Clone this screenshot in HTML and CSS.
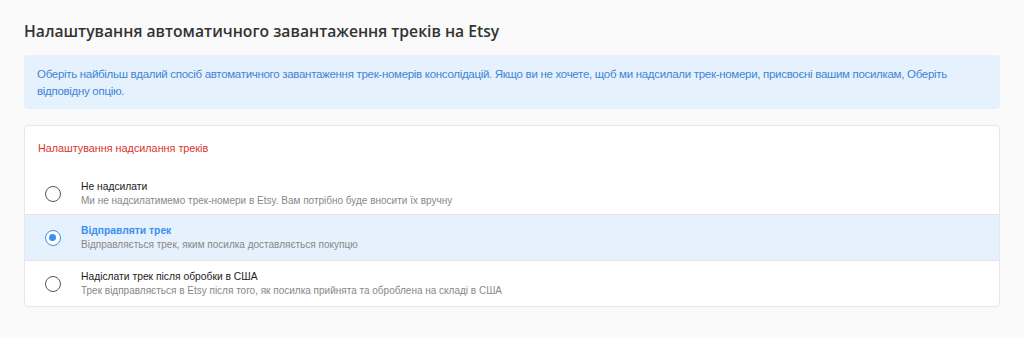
FILE: index.html
```html
<!DOCTYPE html>
<html lang="uk">
<head>
    <meta charset="UTF-8">
    <meta name="viewport" content="width=device-width, initial-scale=1.0">
    <title>Налаштування треків Etsy</title>
    <link rel="stylesheet" href="styles.css">
</head>
<body>
    <div class="page">
        <h1 class="page-title">Налаштування автоматичного завантаження треків на Etsy</h1>

        <div class="info-box">
            Оберіть найбільш вдалий спосіб автоматичного завантаження трек-номерів консолідацій. Якщо ви не хочете, щоб ми надсилали трек-номери, присвоєні вашим посилкам, Оберіть відповідну опцію.
        </div>

        <div class="card">
            <div class="card-header">Налаштування надсилання треків</div>

            <label class="option">
                <span class="radio"></span>
                <span class="option-text">
                    <span class="option-title">Не надсилати</span>
                    <span class="option-desc">Ми не надсилатимемо трек-номери в Etsy. Вам потрібно буде вносити їх вручну</span>
                </span>
            </label>

            <label class="option selected">
                <span class="radio"></span>
                <span class="option-text">
                    <span class="option-title">Відправляти трек</span>
                    <span class="option-desc">Відправляється трек, яким посилка доставляється покупцю</span>
                </span>
            </label>

            <label class="option">
                <span class="radio"></span>
                <span class="option-text">
                    <span class="option-title">Надіслати трек після обробки в США</span>
                    <span class="option-desc">Трек відправляється в Etsy після того, як посилка прийнята та оброблена на складі в США</span>
                </span>
            </label>
        </div>
    </div>
</body>
</html>
```

FILE: styles.css
```css
body {
    margin: 0;
    background-color: #fafafa;
    font-family: "Liberation Sans", Arial, sans-serif;
    color: #333;
}

.page {
    padding: 19px 24px 24px;
}

.page-title {
    margin: 0 0 12px;
    font-family: "Open Sans", "Liberation Sans", sans-serif;
    font-size: 15.7px;
    font-weight: 600;
    line-height: 24px;
    color: #333;
}

.info-box {
    padding: 11px 13px 9px;
    background-color: #e5f1fc;
    border-radius: 4px;
    font-size: 11.5px;
    letter-spacing: -0.3px;
    line-height: 17px;
    color: #3f84d9;
}

.card {
    margin-top: 16px;
    background-color: #fff;
    border: 1px solid #e6e6e6;
    border-radius: 4px;
}

.card-header {
    padding: 14px 13px 13px;
    font-size: 10.8px;
    line-height: 16px;
    color: #d9342b;
}

.option {
    display: flex;
    align-items: center;
    gap: 20px;
    padding: 9px 20px 8px;
    cursor: pointer;
}

.card-header + .option {
    padding: 11px 20px 6px;
}

.option + .option {
    border-top: 1px solid #e6e6e6;
}

.option.selected {
    background-color: #e5f1fc;
}

.radio {
    flex: none;
    width: 16px;
    height: 16px;
    box-sizing: border-box;
    border: 1.5px solid #555;
    border-radius: 50%;
    background-color: #fff;
    position: relative;
}

.selected .radio {
    border-color: #3d8ef0;
}

.selected .radio::after {
    content: "";
    position: absolute;
    left: 3px;
    top: 3px;
    width: 7px;
    height: 7px;
    border-radius: 50%;
    background-color: #3d8ef0;
}

.option-text {
    display: flex;
    flex-direction: column;
}

.option-title {
    font-size: 10.3px;
    line-height: 14px;
    color: #222;
}

.selected .option-title {
    color: #3d8ef0;
    font-weight: bold;
}

.option-desc {
    font-size: 10px;
    line-height: 14px;
    color: #888;
}
```
